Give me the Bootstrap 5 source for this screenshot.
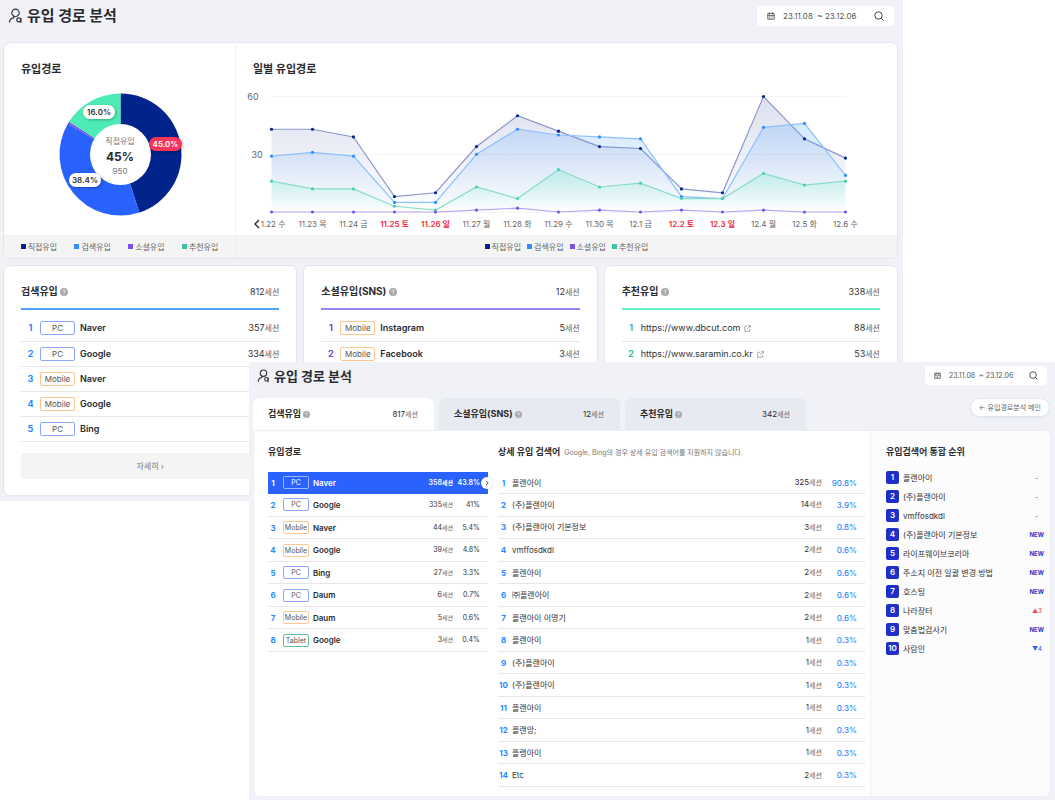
<!DOCTYPE html>
<html lang="ko">
<head>
<meta charset="utf-8">
<meta name="viewport" content="width=device-width, initial-scale=1">
<title>유입 경로 분석</title>
<link rel="stylesheet" href="https://cdn.jsdelivr.net/npm/bootstrap@5.3.0/dist/css/bootstrap.min.css">
<style>
:root{--bg:#f0f2f8;--line:#e3e5ee;--blue:#1f88ff;--violet:#7345e6;--mint:#35bd9d;--navy:#00238c}
body{font-family:"Inter","Noto Sans CJK KR",sans-serif;background:#fff;color:#333;font-size:9px;line-height:12px}
.stage{min-height:800px}
.win-main{width:calc(100% - 152px);background:var(--bg);padding:0 5px 5px 3px}
.win-detail{position:absolute;left:249px;right:0;top:362px;background:var(--bg);padding:0 4px 5px 4px}
.page-title{font-size:15px;line-height:20px;font-weight:700;color:#2b2b2e}
.win-detail .page-title{font-size:13px}
.bar-main{height:42px;padding:6px 4px 0 5px}
.bar-detail{height:36px;padding:4px 4px 0 4px}
.datebox{background:#fff;border-radius:4px;height:20px;padding:0 10px;font-size:8px;color:#555}
.bar-main .datebox{width:137px}
.bar-detail .datebox{width:122px;height:19px;font-size:7px;padding:0 9px}
.iconbtn{border:0;background:none;padding:0;line-height:0;display:flex}
.panel{background:#fff;border:1px solid var(--line);border-radius:7px;overflow:hidden}
.h-sec{font-size:11px;line-height:16px;font-weight:700;color:#2b2b2e;margin:0}
.share{width:232px;border-right:1px solid #eef0f5}
.share .h-sec,.daily .h-sec{padding:18px 17px 8px}
.legendbar{background:#f4f4f5;height:23px;font-size:8px;color:#666}
.daily .legendbar{gap:6px}
.legendbar span::before{content:"";display:inline-block;width:5px;height:5px;margin-right:2px;background:var(--c);vertical-align:1px}
.k-direct{--c:#00238c}.k-search{--c:#2f8fff}.k-social{--c:#7a52e8}.k-refer{--c:#3fc3a4}
.sums{gap:6px;padding-top:6px}
.summary{padding:16px 17px;height:231px;min-width:0}
.sum-head{height:28px;border-bottom:2px solid var(--tone);margin-bottom:6px;padding-bottom:9px}
.sum-head h2{font-size:10px;line-height:18px;font-weight:700;margin:0;color:#2b2b2e}
.sum-head .cnt{padding-top:3px}
.t-blue{--tone:#4fa3ff;--rank:var(--blue)}.t-violet{--tone:#9a80f2;--rank:var(--violet)}.t-mint{--tone:#62f0c6;--rank:var(--mint)}
.cnt{font-size:9px}.cnt small{font-size:8px;color:#666}
.datalist{margin:0;color:#333;--bs-table-bg:transparent;--bs-table-color:#333;table-layout:fixed}
.table.datalist>:not(caption)>*>*{padding:0;border-bottom:1px solid #e6e6e9;vertical-align:middle}
.datalist tr>:last-child,.datalist .c-cnt{text-align:right}
.sum-list tr{height:25px}
.sum-list{font-size:9px}
.table.datalist .rank{font-weight:700;color:var(--rank);text-align:center}
.sum-list .rank{width:19px}.sum-list .c-tag{width:40px}.sum-list .c-cnt{width:46px}
.who{font-weight:600;color:#2b2b2e}
.chip{display:block;width:35px;height:14px;line-height:12px;font-size:8px;text-align:center;border:1px solid #8ca6ff;border-radius:2px;color:#555;font-weight:400}
.chip.mob{border-color:#ffc68f}.chip.tab{border-color:#62bd97}
.more{width:100%;height:26px;background:#f4f4f5;border:0;border-radius:3px;font-size:8px;color:#777;margin-top:11px}
a.ext{color:#333;text-decoration:none}
.tabs{gap:5px}
.tabs .nav-link{width:181px;height:32px;padding:0 16px 0 15px;border:0;border-radius:7px 7px 0 0;background:#e8eaf2;color:#2b2b2e;font-size:9px;font-weight:700;display:flex;align-items:center}
.tabs .nav-link.active{background:#fff}
.tabs .cnt{font-weight:400;font-size:8px}.tabs .cnt small{font-size:7px}
.backbtn{height:19px;border:1px solid var(--line);border-radius:10px;background:#fff;font-size:7px;color:#666;padding:0 8px;margin-right:1px;box-shadow:0 1px 2px #0000000d;white-space:nowrap}
.detail{background:#fff;border-radius:0 7px 7px 7px;border:1px solid #eceef4;overflow:hidden}
.detail h2{font-size:9px;line-height:14px;font-weight:700;color:#2b2b2e;margin:0;white-space:nowrap}
.detail .hd{height:41px;padding-top:14px}
.pane-top .hd{height:37px}
.pane-src{width:234px;padding-left:14px}
.pane-kw{padding:0 5px 9px 10px;min-width:0}
.pane-top{width:180px;background:#fcfcfd;border-left:1px solid #f0f1f5;padding:0 6px 0 15px}
.src,.kw{font-size:8px;--rank:var(--blue)}
.src{height:180px}.kw{height:315px}
.src small,.kw small{font-size:6px;color:#666}
.src .rank{width:15px;padding-right:5px!important}.src .c-tag{width:30px}.src .c-cnt{width:44px;font-size:7px}
.src .c-pct{width:35px;font-size:7px;padding-right:8px!important;position:relative}
.src .chip{width:26px;height:13px;line-height:11px;font-size:7px;position:static}
.table.src .sel>*{background:#2962ff;color:#fff!important;border-bottom-color:#2962ff!important}
.src .sel small,.src .sel .chip{color:#fff}.src .sel .c-cnt,.src .sel .c-pct{font-weight:600}
.src .sel .chip{border-color:#9db7ff}
.go{position:absolute;right:-5px;top:5px;width:12px;height:12px;border:0;border-radius:50%;background:#fff;padding:3px;line-height:0;box-shadow:0 0 2px #0003}
.kw small{font-size:7px}
.kw .rank{width:14px;padding-right:3px!important}.kw .c-cnt{width:60px}
.table.kw .c-pct{width:43px;padding-right:8px!important;color:var(--blue);font-weight:500}
.note{font-size:7px;line-height:16px;color:#777}
.toplist{font-size:8px;margin:0;padding:0;list-style:none}
.toplist li{height:19px;display:flex;align-items:center;gap:4px;color:#333}
.toplist b{width:13px;height:13px;line-height:13px;border-radius:2px;background:#1f2fc8;color:#fff;text-align:center;font-weight:600}
.toplist i{margin-left:auto;font-style:normal;font-size:6px;font-weight:700;color:#2b35c9}
.toplist .flat{padding-right:6px;color:#777}.toplist .up{color:#f5455c;font-weight:500;padding-right:2px}.toplist .down{color:#2962ff;font-weight:500;padding-right:2px}
.trend text{font-size:8px;fill:#666;text-anchor:middle}
.trend .axis{font-size:9px}
.trend .off{fill:#f0283c;font-weight:600}
</style>
</head>
<body>
<svg class="d-none" aria-hidden="true">
  <symbol id="i-user" viewBox="0 0 14 16"><g fill="none" stroke="#333" stroke-width="1.2"><circle cx="7" cy="4.800" r="3.700"/><path d="M1 14.500C1 12 2.500 10.200 5.200 9.800L5.200 8"/><circle cx="10.300" cy="11.800" r="2"/><path d="M12.300 10v5"/></g></symbol>
  <symbol id="i-cal" viewBox="0 0 10 10"><path fill="none" stroke="#444" d="M1 2h8v7H1zM3 .3V3M7 .3V3M1 4.500h8"/><path fill="#555" d="M2.500 5.500h1v1h-1zM4.500 5.500h1v1h-1zM6.500 5.500h1v1h-1zM2.500 7.200h1v1h-1zM4.500 7.200h1v1h-1z"/></symbol>
  <symbol id="i-find" viewBox="0 0 10 10"><g fill="none" stroke="#444"><circle cx="4.500" cy="4.500" r="3.700"/><path d="m7.200 7.200 2.400 2.400"/></g></symbol>
  <symbol id="i-help" viewBox="0 0 10 10"><circle cx="5" cy="5" r="5" fill="#a9a9ad"/><path d="M3.500 4c0-2 3-2 3-.2C6.500 5 5 4.900 5 6.200M5 7v1" fill="none" stroke="#fff"/></symbol>
  <symbol id="i-ext" viewBox="0 0 8 8"><path fill="none" stroke="#888" stroke-width=".8" d="M3.500 1.500H.8v5.700h5.700V4.500M4.800.6h2.600v2.600M7.300.7 3.500 4.500"/></symbol>
  <symbol id="i-next" viewBox="0 0 6 6"><path fill="none" stroke="#444" d="m2 .8 2.200 2.200L2 5.200"/></symbol>
</svg>

<main class="stage position-relative">
  <section class="win-main">
    <header class="bar-main d-flex justify-content-between">
      <h1 class="page-title d-flex align-items-center gap-1 mb-0 align-self-start"><svg width="15" height="16"><use href="#i-user"/></svg>유입 경로 분석</h1>
      <div class="datebox d-flex align-items-center">
        <svg width="8" height="8" class="me-2"><use href="#i-cal"/></svg><span>23.11.08 &nbsp;~ 23.12.06</span>
        <button class="iconbtn ms-auto" aria-label="검색"><svg width="10" height="10"><use href="#i-find"/></svg></button>
      </div>
    </header>

    <div class="panel d-flex">
      <div class="share flex-shrink-0 d-flex flex-column">
        <h2 class="h-sec">유입경로</h2>
        <svg class="d-block mx-auto" width="150" height="150" viewBox="45 85 150 150" id="donut">
          <defs><filter id="sh" x="-30%" y="-50%" width="160%" height="220%"><feDropShadow dx="1" dy="1" stdDeviation="1.500" flood-opacity=".3"/></filter></defs>
          <g id="slices"></g>
          <circle cx="120.500" cy="154.500" r="30.500" fill="#fff"/>
          <g text-anchor="middle">
            <text x="120" y="144" font-size="8" fill="#777">직접유입</text>
            <text x="120" y="161" font-size="12" font-weight="700" fill="#2b2b2e">45%</text>
            <text x="120" y="174" font-size="8" fill="#777">950</text>
            <g filter="url(#sh)"><rect x="83" y="105" width="32" height="14" rx="7" fill="#fff"/><rect x="149" y="137" width="33" height="14" rx="7" fill="#f5365c"/><rect x="69" y="173" width="32" height="14" rx="7" fill="#fff"/></g>
            <g font-size="8" font-weight="600" fill="#333"><text x="99" y="115">16.0%</text><text x="165.500" y="147" fill="#fff">45.0%</text><text x="85" y="183">38.4%</text></g>
          </g>
        </svg>
        <div class="legendbar d-flex align-items-center justify-content-around px-2">
          <span class="k-direct">직접유입</span><span class="k-search">검색유입</span><span class="k-social">소셜유입</span><span class="k-refer">추천유입</span>
        </div>
      </div>
      <div class="daily flex-grow-1 d-flex flex-column">
        <h2 class="h-sec">일별 유입경로</h2>
        <svg class="trend d-block w-100" viewBox="236 85 661 150" id="trend">
          <defs>
            <linearGradient id="g0" x2="0" y2="1"><stop stop-color="#00238c" stop-opacity=".14"/><stop offset="1" stop-color="#00238c" stop-opacity="0"/></linearGradient>
            <linearGradient id="g1" x2="0" y2="1"><stop stop-color="#2f8fff" stop-opacity=".2"/><stop offset="1" stop-color="#2f8fff" stop-opacity="0"/></linearGradient>
            <linearGradient id="g2" x2="0" y2="1"><stop stop-color="#4eebb5" stop-opacity=".24"/><stop offset="1" stop-color="#4eebb5" stop-opacity="0"/></linearGradient>
          </defs>
        </svg>
        <div class="legendbar d-flex align-items-center justify-content-center">
          <span class="k-direct">직접유입</span><span class="k-search">검색유입</span><span class="k-social">소셜유입</span><span class="k-refer">추천유입</span>
        </div>
      </div>
    </div>

    <div class="sums d-flex">
      <section class="panel summary t-blue flex-fill w-100">
        <div class="sum-head d-flex justify-content-between align-items-center"><h2>검색유입 <svg width="8" height="8"><use href="#i-help"/></svg></h2><span class="cnt">812<small>세션</small></span></div>
        <table class="table datalist sum-list">
          <tr><td class="rank">1</td><td class="c-tag"><span class="chip">PC</span></td><td class="who">Naver</td><td class="c-cnt cnt">357<small>세션</small></td></tr>
          <tr><td class="rank">2</td><td class="c-tag"><span class="chip">PC</span></td><td class="who">Google</td><td class="c-cnt cnt">334<small>세션</small></td></tr>
          <tr><td class="rank">3</td><td class="c-tag"><span class="chip mob">Mobile</span></td><td class="who">Naver</td><td></td></tr>
          <tr><td class="rank">4</td><td class="c-tag"><span class="chip mob">Mobile</span></td><td class="who">Google</td><td></td></tr>
          <tr><td class="rank">5</td><td class="c-tag"><span class="chip">PC</span></td><td class="who">Bing</td><td></td></tr>
        </table>
        <button class="more">자세히 ›</button>
      </section>
      <section class="panel summary t-violet flex-fill w-100">
        <div class="sum-head d-flex justify-content-between align-items-center"><h2>소셜유입(SNS) <svg width="8" height="8"><use href="#i-help"/></svg></h2><span class="cnt">12<small>세션</small></span></div>
        <table class="table datalist sum-list">
          <tr><td class="rank">1</td><td class="c-tag"><span class="chip mob">Mobile</span></td><td class="who">Instagram</td><td class="c-cnt cnt">5<small>세션</small></td></tr>
          <tr><td class="rank">2</td><td class="c-tag"><span class="chip mob">Mobile</span></td><td class="who">Facebook</td><td class="c-cnt cnt">3<small>세션</small></td></tr>
        </table>
      </section>
      <section class="panel summary t-mint flex-fill w-100">
        <div class="sum-head d-flex justify-content-between align-items-center"><h2>추천유입 <svg width="8" height="8"><use href="#i-help"/></svg></h2><span class="cnt">338<small>세션</small></span></div>
        <table class="table datalist sum-list">
          <tr><td class="rank">1</td><td><a class="ext" href="#">https://www.dbcut.com<svg class="ms-1" width="7" height="7"><use href="#i-ext"/></svg></a></td><td class="c-cnt cnt">88<small>세션</small></td></tr>
          <tr><td class="rank">2</td><td><a class="ext" href="#">https://www.saramin.co.kr<svg class="ms-1" width="7" height="7"><use href="#i-ext"/></svg></a></td><td class="c-cnt cnt">53<small>세션</small></td></tr>
        </table>
      </section>
    </div>
  </section>

  <section class="win-detail">
    <header class="bar-detail d-flex justify-content-between">
      <h1 class="page-title d-flex align-items-center gap-1 mb-0 align-self-start"><svg width="13" height="14"><use href="#i-user"/></svg>유입 경로 분석</h1>
      <div class="datebox d-flex align-items-center">
        <svg width="7" height="7" class="me-2"><use href="#i-cal"/></svg><span>23.11.08 &nbsp;~ 23.12.06</span>
        <button class="iconbtn ms-auto" aria-label="검색"><svg width="9" height="9"><use href="#i-find"/></svg></button>
      </div>
    </header>
    <div class="d-flex justify-content-between">
      <nav class="tabs d-flex">
        <button class="nav-link active">검색유입&nbsp;<svg width="7" height="7"><use href="#i-help"/></svg><span class="cnt ms-auto">817<small>세션</small></span></button>
        <button class="nav-link">소셜유입(SNS)&nbsp;<svg width="7" height="7"><use href="#i-help"/></svg><span class="cnt ms-auto">12<small>세션</small></span></button>
        <button class="nav-link">추천유입&nbsp;<svg width="7" height="7"><use href="#i-help"/></svg><span class="cnt ms-auto">342<small>세션</small></span></button>
      </nav>
      <button class="backbtn">← 유입경로분석 메인</button>
    </div>
    <div class="detail d-flex">
      <section class="pane-src flex-shrink-0">
        <div class="hd"><h2>유입경로</h2></div>
        <table class="table datalist src">
          <tr class="sel"><td class="rank">1</td><td class="c-tag"><span class="chip">PC</span></td><td class="who">Naver</td><td class="c-cnt">358<small>세션</small></td><td class="c-pct">43.8%<button class="go" aria-label="상세 보기"><svg width="6" height="6"><use href="#i-next"/></svg></button></td></tr>
          <tr><td class="rank">2</td><td><span class="chip">PC</span></td><td class="who">Google</td><td class="c-cnt">335<small>세션</small></td><td class="c-pct">41%</td></tr>
          <tr><td class="rank">3</td><td><span class="chip mob">Mobile</span></td><td class="who">Naver</td><td class="c-cnt">44<small>세션</small></td><td class="c-pct">5.4%</td></tr>
          <tr><td class="rank">4</td><td><span class="chip mob">Mobile</span></td><td class="who">Google</td><td class="c-cnt">39<small>세션</small></td><td class="c-pct">4.8%</td></tr>
          <tr><td class="rank">5</td><td><span class="chip">PC</span></td><td class="who">Bing</td><td class="c-cnt">27<small>세션</small></td><td class="c-pct">3.3%</td></tr>
          <tr><td class="rank">6</td><td><span class="chip">PC</span></td><td class="who">Daum</td><td class="c-cnt">6<small>세션</small></td><td class="c-pct">0.7%</td></tr>
          <tr><td class="rank">7</td><td><span class="chip mob">Mobile</span></td><td class="who">Daum</td><td class="c-cnt">5<small>세션</small></td><td class="c-pct">0.6%</td></tr>
          <tr><td class="rank">8</td><td><span class="chip tab">Tablet</span></td><td class="who">Google</td><td class="c-cnt">3<small>세션</small></td><td class="c-pct">0.4%</td></tr>
        </table>
      </section>
      <section class="pane-kw flex-grow-1">
        <div class="hd d-flex gap-1"><h2>상세 유입 검색어</h2><span class="note">Google, Bing의 경우 상세 유입 검색어를 지원하지 않습니다.</span></div>
        <table class="table datalist kw">
          <tr><td class="rank">1</td><td>플랜아이</td><td class="c-cnt">325<small>세션</small></td><td class="c-pct">90.8%</td></tr>
          <tr><td class="rank">2</td><td>(주)플랜아이</td><td class="c-cnt">14<small>세션</small></td><td class="c-pct">3.9%</td></tr>
          <tr><td class="rank">3</td><td>(주)플랜아이 기본정보</td><td class="c-cnt">3<small>세션</small></td><td class="c-pct">0.8%</td></tr>
          <tr><td class="rank">4</td><td>vmffosdkdl</td><td class="c-cnt">2<small>세션</small></td><td class="c-pct">0.6%</td></tr>
          <tr><td class="rank">5</td><td>플렌아이</td><td class="c-cnt">2<small>세션</small></td><td class="c-pct">0.6%</td></tr>
          <tr><td class="rank">6</td><td>㈜플랜아이</td><td class="c-cnt">2<small>세션</small></td><td class="c-pct">0.6%</td></tr>
          <tr><td class="rank">7</td><td>플랜아이 이명기</td><td class="c-cnt">2<small>세션</small></td><td class="c-pct">0.6%</td></tr>
          <tr><td class="rank">8</td><td>플랜아이</td><td class="c-cnt">1<small>세션</small></td><td class="c-pct">0.3%</td></tr>
          <tr><td class="rank">9</td><td>(주)플랜아이</td><td class="c-cnt">1<small>세션</small></td><td class="c-pct">0.3%</td></tr>
          <tr><td class="rank">10</td><td>(주)플랜아이</td><td class="c-cnt">1<small>세션</small></td><td class="c-pct">0.3%</td></tr>
          <tr><td class="rank">11</td><td>플랜아이</td><td class="c-cnt">1<small>세션</small></td><td class="c-pct">0.3%</td></tr>
          <tr><td class="rank">12</td><td>플랜앙;</td><td class="c-cnt">1<small>세션</small></td><td class="c-pct">0.3%</td></tr>
          <tr><td class="rank">13</td><td>플랭아이</td><td class="c-cnt">1<small>세션</small></td><td class="c-pct">0.3%</td></tr>
          <tr><td class="rank">14</td><td>Etc</td><td class="c-cnt">2<small>세션</small></td><td class="c-pct">0.3%</td></tr>
        </table>
      </section>
      <section class="pane-top flex-shrink-0">
        <div class="hd"><h2>유입검색어 통합 순위</h2></div>
        <ol class="toplist">
          <li><b>1</b>플랜아이<i class="flat">-</i></li>
          <li><b>2</b>(주)플랜아이<i class="flat">-</i></li>
          <li><b>3</b>vmffosdkdl<i class="flat">-</i></li>
          <li><b>4</b>(주)플랜아이 기본정보<i>NEW</i></li>
          <li><b>5</b>라이프웨이브코리아<i>NEW</i></li>
          <li><b>6</b>주소지 이전 일괄 변경 방법<i>NEW</i></li>
          <li><b>7</b>호스팅<i>NEW</i></li>
          <li><b>8</b>나라장터<i class="up">▲3</i></li>
          <li><b>9</b>맞춤법검사기<i>NEW</i></li>
          <li><b>10</b>사람인<i class="down">▼4</i></li>
        </ol>
      </section>
    </div>
  </section>
</main>

<script src="https://cdn.jsdelivr.net/npm/bootstrap@5.3.0/dist/js/bootstrap.bundle.min.js"></script>
<script>
// Share donut
const slices = [[45,'#00238c'],[38.4,'#2962ff'],[.6,'#7a52e8'],[16,'#4eebb5']];
let at = 0, arcs = '';
const pt = p => { const a = p / 100 * 2 * Math.PI; return (120.5 + 61 * Math.sin(a)) + ' ' + (154.5 - 61 * Math.cos(a)); };
slices.forEach(([v, c]) => { arcs += `<path fill="${c}" d="M120.5 154.5L${pt(at)}A61 61 0 0 1 ${pt(at + v)}Z"/>`; at += v; });
document.getElementById('slices').innerHTML = arcs;

// Daily trend
const days = ['11.22 수','11.23 목','11.24 금','11.25 토','11.26 일','11.27 월','11.28 화','11.29 수','11.30 목','12.1 금','12.2 토','12.3 일','12.4 월','12.5 화','12.6 수'];
const series = [
  {c:'#00238c', l:'#8d97cb', f:'url(#g0)', v:[43,43,39,8,10,34,50,42,34,33,12,10,60,38,28]},
  {c:'#2f8fff', l:'#8cc1ff', f:'url(#g1)', v:[29,31,29,5,5,30,43,40,39,38,8,7,44,46,19]},
  {c:'#4bd3ac', l:'#8adcc8', f:'url(#g2)', v:[16,12,12,3,1,13,7,22,13,15,7,7,20,14,16]},
  {c:'#7a52e8', l:'#b8a3f2', f:'none', v:[0,0,0,0,0,1,2,0,1,0,1,0,1,0,0]}
];
const X = i => 271.5 + i * 41, Y = v => 212 - v * 1.925;
let s = '<path stroke="#f5f5f7" d="M271 96.500H846M271 154.500H846M271 212.500H846"/><text class="axis" x="253" y="100">60</text><text class="axis" x="257" y="158">30</text>';
series.forEach(o => {
  const line = o.v.map((v, i) => X(i) + ' ' + Y(v)).join('L');
  s += `<path fill="${o.f}" d="M${line}V212H271.5Z"/><path fill="none" stroke="${o.l}" stroke-width="1.2" d="M${line}"/>`;
});
series.forEach(o => o.v.forEach((v, i) => s += `<circle cx="${X(i)}" cy="${Y(v)}" r="1.6" fill="${o.c}"/>`));
days.forEach((d, i) => s += `<text x="${X(i)}" y="227" class="${/[토일]$/.test(d) ? 'off' : ''}">${d}</text>`);
s += '<path fill="#fff" d="M250 217h11v14h-11z"/><path fill="none" stroke="#333" stroke-width="1.500" d="m259 220-4 4 4 4"/>';
document.getElementById('trend').innerHTML += s;
</script>
</body>
</html>
